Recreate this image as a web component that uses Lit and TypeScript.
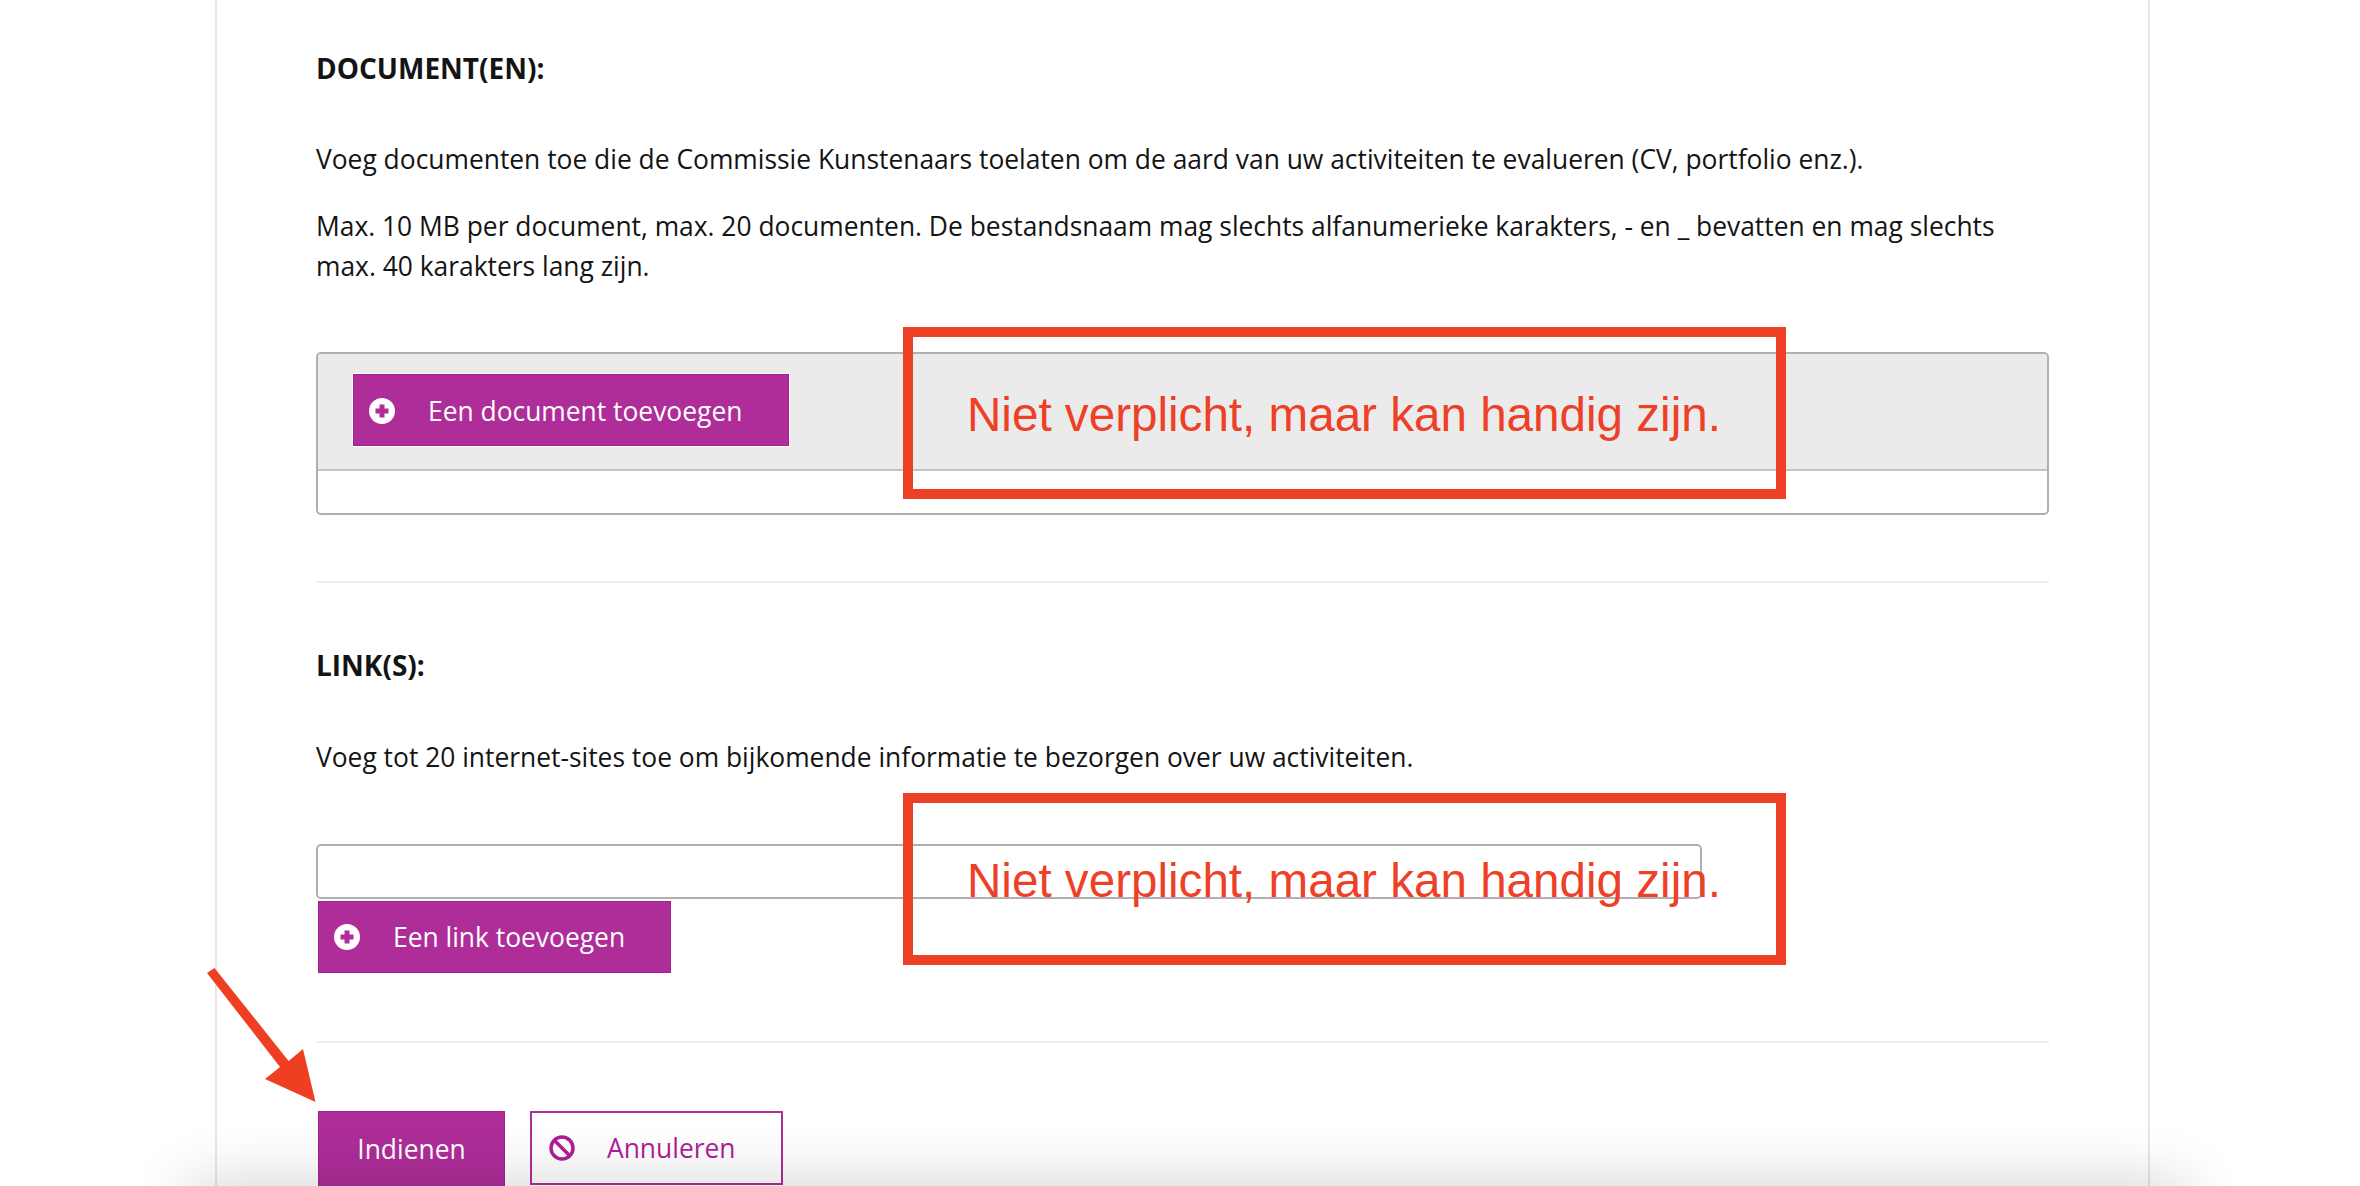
import { LitElement, html, css, svg } from "lit";
import { customElement } from "lit/decorators.js";

const plus = svg`<circle cx="13" cy="13" r="13" fill="#fff"/><path d="M13 6.5v13M6.5 13h13" stroke="#ae2d99" stroke-width="5"/>`;

@customElement("app-root")
export class AppRoot extends LitElement {
  static styles = css`
    :host { display: block; position: relative; height: 1186px; overflow: hidden; background: #fff; font-family: "Open Sans", sans-serif; color: #141414; font-size: 26.4px; line-height: 40px; }
    * { box-sizing: border-box; }
    .card { width: 1935px; height: 1186px; margin-left: 215px; border-left: 2px solid #e6e6e6; border-right: 2px solid #e6e6e6; padding: 48px 99px 0 99px; }
    h2 { margin: 0; font-size: 28px; line-height: 40px; font-weight: 700; }
    p { margin: 0; }
    .p1 { margin-top: 51px; }
    .p2 { margin-top: 27px; }
    .files { margin-top: 66px; height: 163px; border: 2px solid #b0b0b0; border-radius: 5px; overflow: hidden; }
    .files-head { height: 117px; background: #ebebeb; border-bottom: 2px solid #c4c4c4; padding: 19px 0 0 34px; }
    .btn { display: flex; align-items: center; background: #ae2d99; color: #fff; border: 1px solid #a0218c; }
    .doc { width: 438px; height: 74px; padding: 2px 0 0 16px; border: 1px solid #fff; box-shadow: inset 0 0 0 1px #a0218c; }
    .doc svg { margin-right: 33px; }
    hr { margin: 0; border: 0; height: 2px; background: #eeeeee; }
    .hr1 { margin-top: 66px; }
    .h2 { margin-top: 62px; }
    .p3 { margin-top: 52px; }
    .input { margin-top: 67px; width: 1386px; height: 55px; border: 2px solid #b0b0b0; border-radius: 5px; }
    .link { margin: 2px 0 0 2px; width: 353px; height: 72px; padding-left: 15px; }
    .link svg { margin-right: 33px; }
    .hr2 { margin-top: 68px; }
    .actions { display: flex; gap: 25px; margin: 68px 0 0 2px; }
    .submit { width: 187px; height: 90px; justify-content: center; padding-bottom: 14px; }
    .cancel { display: flex; align-items: center; width: 253px; height: 74px; padding-left: 17px; background: #fff; color: #ae1f9a; border: 2px solid #ae2d99; }
    .cancel svg { margin-right: 32px; }
    .note { position: absolute; left: 903px; width: 883px; height: 172px; border: 10px solid #ee3f27; font-family: "Liberation Sans", Arial, sans-serif; font-size: 47.6px; line-height: 56px; color: #ee3f27; padding: 50px 0 0 54px; white-space: nowrap; }
    .n1 { top: 327px; }
    .n2 { top: 793px; }
    .arrow { position: absolute; left: 200px; top: 960px; }
    .fade { position: absolute; left: 190px; width: 1995px; top: 1186px; height: 40px; box-shadow: 0 0 60px rgba(0, 0, 0, 0.22); pointer-events: none; }
  `;

  render() {
    return html`
      <div class="card">
        <h2>DOCUMENT(EN):</h2>
        <p class="p1">Voeg documenten toe die de Commissie Kunstenaars toelaten om de aard van uw activiteiten te evalueren (CV, portfolio enz.).</p>
        <p class="p2">Max. 10 MB per document, max. 20 documenten. De bestandsnaam mag slechts alfanumerieke karakters, - en _ bevatten en mag slechts max. 40 karakters lang zijn.</p>
        <div class="files">
          <div class="files-head">
            <div class="btn doc"><svg width="26" height="26" viewBox="0 0 26 26">${plus}</svg>Een document toevoegen</div>
          </div>
        </div>
        <hr class="hr1" />
        <h2 class="h2">LINK(S):</h2>
        <p class="p3">Voeg tot 20 internet-sites toe om bijkomende informatie te bezorgen over uw activiteiten.</p>
        <div class="input"></div>
        <div class="btn link"><svg width="26" height="26" viewBox="0 0 26 26">${plus}</svg>Een link toevoegen</div>
        <hr class="hr2" />
        <div class="actions">
          <div class="btn submit">Indienen</div>
          <div class="cancel"><svg width="26" height="26" viewBox="0 0 26 26"><circle cx="13" cy="13" r="11" fill="none" stroke="#ae1f9a" stroke-width="3.5"/><path d="M5.5 5.5l15 15" stroke="#ae1f9a" stroke-width="3.5"/></svg>Annuleren</div>
        </div>
      </div>
      <div class="note n1">Niet verplicht, maar kan handig zijn.</div>
      <div class="note n2">Niet verplicht, maar kan handig zijn.</div>
      <svg class="arrow" width="130" height="150" viewBox="200 960 130 150"><path d="M207 973L214.5 968L288.6 1061L303 1049L315.5 1102L265 1079L280 1067Z" fill="#ee3f23"/></svg>
      <div class="fade"></div>
    `;
  }
}
